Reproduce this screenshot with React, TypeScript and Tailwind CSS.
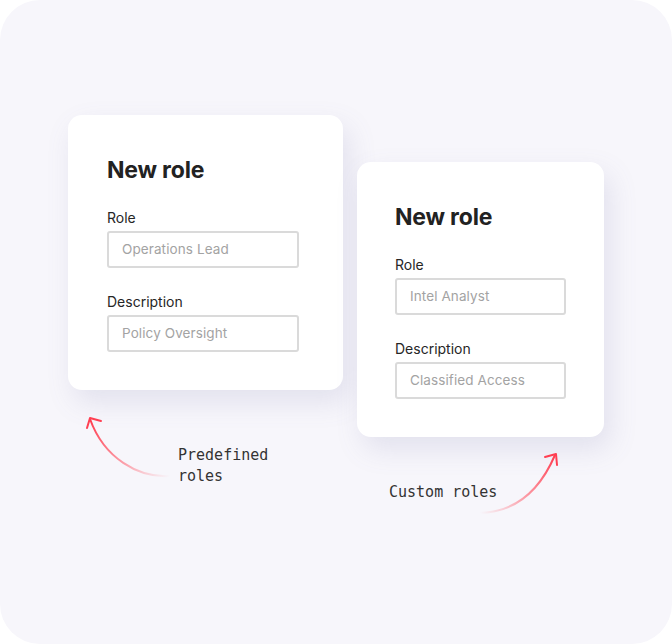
import React from "react";

type Field = { label: string; placeholder: string };

type RoleCardProps = {
  fields: Field[];
  width: string;
  padLeft: string;
  inputWidth: string;
};

function RoleCard({ fields, width, padLeft, inputWidth }: RoleCardProps) {
  return (
    <div
      className={`${width} ${padLeft} rounded-[14px] bg-white pt-[41px] pb-[38px] shadow-[6px_12px_28px_rgba(110,105,160,0.15)]`}
    >
      <h2 className="text-[23px] font-bold leading-[28px] tracking-[-0.2px] text-[#222222]">
        New role
      </h2>
      <div className="mt-[24px] flex flex-col">
        {fields.map((f, i) => (
          <div key={f.label} className={i > 0 ? "mt-[24px]" : ""}>
            <label className="block text-sm leading-5 text-[#262626]">
              {f.label}
            </label>
            <div
              className={`${inputWidth} mt-[3px] h-[37px] rounded-[3px] border-2 border-[#dadada] pl-[13px] flex items-center`}
            >
              <span className="text-[13.5px] tracking-[0.1px] text-[#a3a3a3]">
                {f.placeholder}
              </span>
            </div>
          </div>
        ))}
      </div>
    </div>
  );
}

export default function App() {
  return (
    <div className="w-[672px] h-[644px] bg-white font-['Inter',sans-serif]">
      <div className="relative flex h-full gap-[14px] rounded-[40px] bg-[#f7f6fb] pl-[68px] pt-[115px]">
        <div className="flex flex-col">
          <RoleCard
            width="w-[275px]"
            padLeft="pl-[39px]"
            inputWidth="w-[192px]"
            fields={[
              { label: "Role", placeholder: "Operations Lead" },
              { label: "Description", placeholder: "Policy Oversight" },
            ]}
          />
          <p className="ml-[110px] mt-[55px] font-['DejaVu_Sans_Mono',monospace] text-[15px] leading-[21px] text-[#333333]">
            Predefined
            <br />
            roles
          </p>
        </div>
        <div className="flex flex-col pt-[47px]">
          <RoleCard
            width="w-[247px]"
            padLeft="pl-[38px]"
            inputWidth="w-[171px]"
            fields={[
              { label: "Role", placeholder: "Intel Analyst" },
              { label: "Description", placeholder: "Classified Access" },
            ]}
          />
          <p className="ml-[32px] mt-[45px] font-['DejaVu_Sans_Mono',monospace] text-[15px] leading-[21px] text-[#333333]">
            Custom roles
          </p>
        </div>

        <svg
          className="pointer-events-none absolute inset-0"
          width="672"
          height="644"
          viewBox="0 0 672 644"
          fill="none"
        >
          <defs>
            <linearGradient id="arrowA" gradientUnits="userSpaceOnUse" x1="170" y1="476" x2="92" y2="420">
              <stop offset="0" stopColor="#ff6b78" stopOpacity="0" />
              <stop offset="0.45" stopColor="#ff5d6b" stopOpacity="0.55" />
              <stop offset="1" stopColor="#ff3f52" stopOpacity="1" />
            </linearGradient>
            <linearGradient id="arrowB" gradientUnits="userSpaceOnUse" x1="480" y1="513" x2="554" y2="456">
              <stop offset="0" stopColor="#ff6b78" stopOpacity="0" />
              <stop offset="0.45" stopColor="#ff5d6b" stopOpacity="0.55" />
              <stop offset="1" stopColor="#ff3f52" stopOpacity="1" />
            </linearGradient>
          </defs>
          <path d="M170 476 C138 478 104 458 90 419" stroke="url(#arrowA)" strokeWidth="2" strokeLinecap="round" />
          <path d="M101 421 L90 418 L87 428" stroke="#ff3f52" strokeWidth="2" strokeLinecap="round" strokeLinejoin="round" />
          <path d="M480 513 C516 512 540 490 555 455" stroke="url(#arrowB)" strokeWidth="2" strokeLinecap="round" />
          <path d="M545 457 L556 454 L557 465" stroke="#ff3f52" strokeWidth="2" strokeLinecap="round" strokeLinejoin="round" />
        </svg>
      </div>
    </div>
  );
}
